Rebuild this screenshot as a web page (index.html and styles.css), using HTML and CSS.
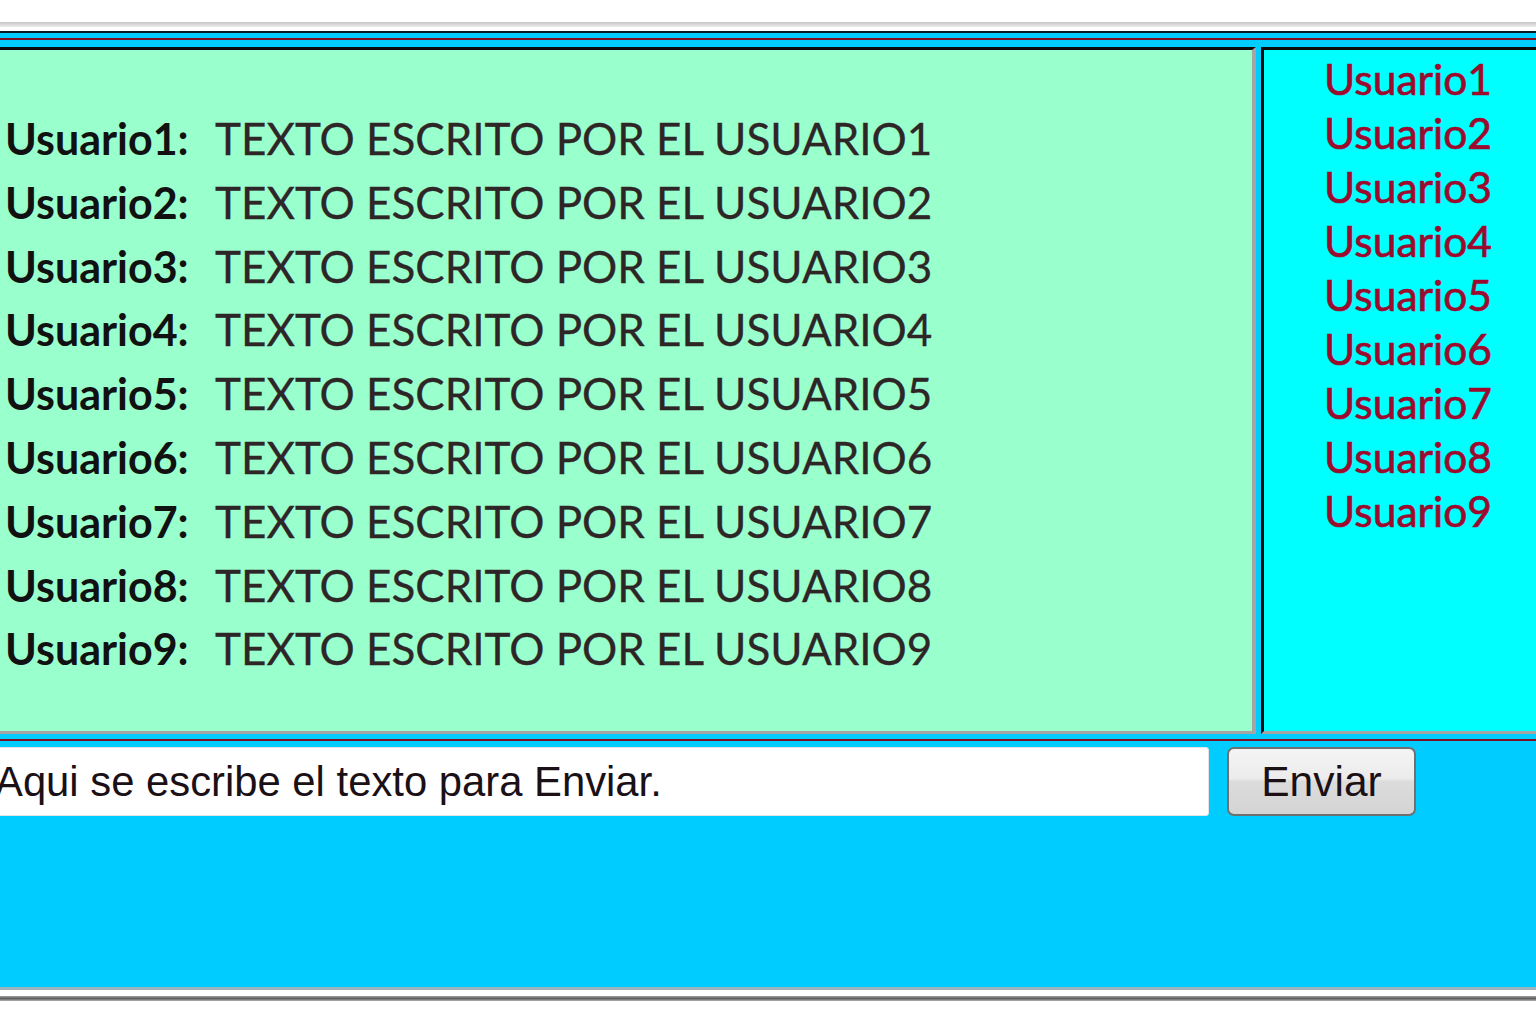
FILE: index.html
```html
<!DOCTYPE html>
<html lang="es">
<head>
<meta charset="utf-8">
<title>Chat</title>
<link rel="stylesheet" href="styles.css">
</head>
<body>
<div class="rule-top"></div>
<div class="chat">
  <div class="band"><div class="band-line"></div></div>
  <div class="panels">
    <div class="messages">
      <div class="msg"><span class="who">Usuario1:</span><span class="txt">TEXTO ESCRITO POR EL USUARIO1</span></div>
      <div class="msg"><span class="who">Usuario2:</span><span class="txt">TEXTO ESCRITO POR EL USUARIO2</span></div>
      <div class="msg"><span class="who">Usuario3:</span><span class="txt">TEXTO ESCRITO POR EL USUARIO3</span></div>
      <div class="msg"><span class="who">Usuario4:</span><span class="txt">TEXTO ESCRITO POR EL USUARIO4</span></div>
      <div class="msg"><span class="who">Usuario5:</span><span class="txt">TEXTO ESCRITO POR EL USUARIO5</span></div>
      <div class="msg"><span class="who">Usuario6:</span><span class="txt">TEXTO ESCRITO POR EL USUARIO6</span></div>
      <div class="msg"><span class="who">Usuario7:</span><span class="txt">TEXTO ESCRITO POR EL USUARIO7</span></div>
      <div class="msg"><span class="who">Usuario8:</span><span class="txt">TEXTO ESCRITO POR EL USUARIO8</span></div>
      <div class="msg"><span class="who">Usuario9:</span><span class="txt">TEXTO ESCRITO POR EL USUARIO9</span></div>
    </div>
    <ul class="users">
      <li>Usuario1</li>
      <li>Usuario2</li>
      <li>Usuario3</li>
      <li>Usuario4</li>
      <li>Usuario5</li>
      <li>Usuario6</li>
      <li>Usuario7</li>
      <li>Usuario8</li>
      <li>Usuario9</li>
    </ul>
  </div>
  <div class="band band-low"><div class="band-line"></div></div>
  <div class="composer">
    <input class="entry" type="text" value="Aqui se escribe el texto para Enviar.">
    <button class="send" type="button">Enviar</button>
  </div>
</div>
<div class="rule-bottom"></div>
</body>
</html>
```
FILE: styles.css
```css
html, body {
  margin: 0;
  padding: 0;
  background: #ffffff;
  overflow: hidden;
}

body {
  width: 1536px;
  height: 1024px;
  padding-top: 22px;
  box-sizing: border-box;
}

.rule-top {
  height: 5px;
  background: linear-gradient(#c8c8c8, #d8d8d8 50%, #ececec);
  margin-bottom: 4px;
}

.chat {
  background: #00ccff;
  border-top: 2px solid #0a1a22;
  border-bottom: 3px solid #9fb4bd;
  height: 959px;
  box-sizing: border-box;
  display: flex;
  flex-direction: column;
}

.band {
  height: 14px;
  display: flex;
  flex-direction: column;
  justify-content: flex-start;
  padding-top: 5px;
  box-sizing: border-box;
}

.band-line {
  height: 2px;
  background: #7a1020;
}

.band-low {
  height: 13px;
  padding-top: 5px;
}

.panels {
  display: flex;
  gap: 5px;
  height: 687px;
}

.messages {
  width: 1256px;
  flex: none;
  background: #99ffcc;
  border-top: 3px solid #0b0b0b;
  border-right: 4px solid #a5a5a5;
  border-bottom: 3px solid #a5a5a5;
  box-sizing: border-box;
  padding: 57px 0 0 5px;
  font-family: Lato, "Open Sans", sans-serif;
  color: #1c1c1c;
}

.msg {
  display: flex;
  align-items: baseline;
  height: 63.8px;
  line-height: 63.8px;
  font-size: 44px;
}

.who {
  font-weight: 700;
  width: 210px;
  flex: none;
  color: #111;
  font-size: 43px;
}

.txt {
  font-weight: 400;
  color: #2e2626;
  -webkit-text-stroke: 0.3px #2e2626;
}

.users {
  list-style: none;
  margin: 0;
  width: 300px;
  flex: none;
  background: #00ffff;
  border-top: 3px solid #0b0b0b;
  border-left: 3px solid #0b0b0b;
  border-bottom: 3px solid #a5a5a5;
  box-sizing: border-box;
  padding: 2px 9px 0 0;
  font-family: Lato, "Open Sans", sans-serif;
  font-size: 42.5px;
  line-height: 54px;
  color: #9c0a2e;
  -webkit-text-stroke: 0.7px #9c0a2e;
  text-align: center;
}

.composer {
  display: flex;
  align-items: stretch;
  gap: 18px;
  height: 69px;
}

.entry {
  width: 1219px;
  margin-left: -10px;
  box-sizing: border-box;
  border: 1px solid #e4e4e4;
  border-radius: 3px;
  background: #ffffff;
  padding: 0 0 0 4px;
  font-family: "Liberation Sans", Arial, sans-serif;
  font-size: 41.8px;
  color: #1a1016;
  outline: none;
}

.send {
  width: 189px;
  box-sizing: border-box;
  border: 2px solid #707070;
  border-radius: 7px;
  background: linear-gradient(#f4f4f4, #ececec 45%, #dcdcdc 50%, #d4d4d4);
  font-family: "Liberation Sans", Arial, sans-serif;
  font-size: 42.5px;
  color: #1a1016;
  padding: 0;
}

.rule-bottom {
  height: 5px;
  margin-top: 6px;
  background: linear-gradient(#a0a0a0, #606060 50%, #b0b0b0);
}
```
